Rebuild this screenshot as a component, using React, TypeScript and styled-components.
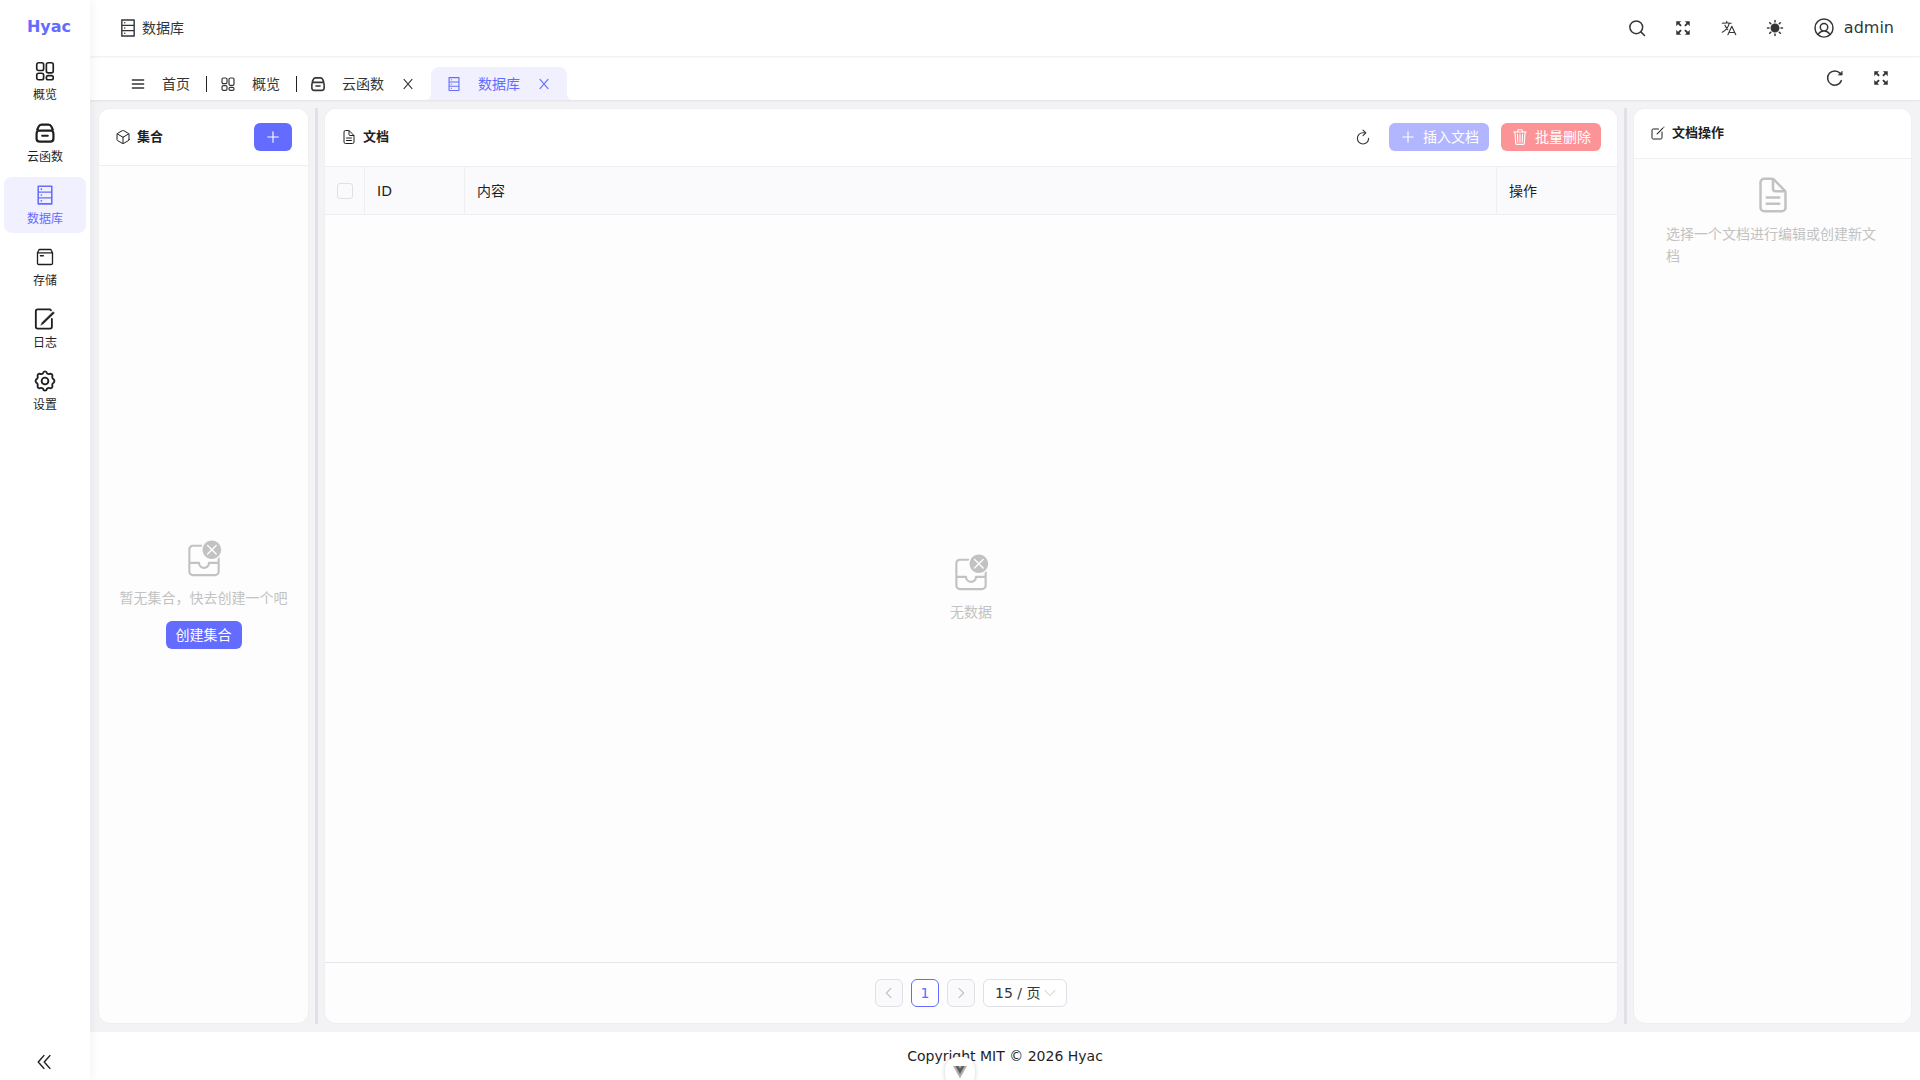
import React from 'react';
import styled, { createGlobalStyle, css } from 'styled-components';
import { AiOutlineDatabase } from 'react-icons/ai';
import { IoCubeOutline, IoDocumentTextOutline, IoCreateOutline, IoTrashOutline, IoRefreshOutline } from 'react-icons/io5';
import { PiUserCircle } from 'react-icons/pi';
import { HiOutlineLanguage } from 'react-icons/hi2';
import { MdSunny } from 'react-icons/md';

const Global = createGlobalStyle`
  *, *::before, *::after { box-sizing: border-box; }
  body {
    margin: 0;
    font: 14px/22px "DejaVu Sans", "Noto Sans CJK SC", sans-serif;
    color: #1f1f1f;
    background: #fff;
  }
  button, input, select { font: inherit; color: inherit; margin: 0; }
  button { border: 0; padding: 0; background: none; cursor: pointer; }
  a { color: inherit; text-decoration: none; }
  h1, h2, p { margin: 0; }
  svg { display: block; flex: none; }
`;

const Shell = styled.div`
  display: flex;
  min-height: 100vh;
`;

const Sidebar = styled.aside`
  position: relative;
  z-index: 2;
  width: 90px;
  flex: none;
  display: flex;
  flex-direction: column;
  background: #fff;
  box-shadow: 2px 0 8px rgba(29, 35, 41, 0.05);
`;

const Brand = styled.a`
  height: 53px;
  padding-left: 8px;
  display: flex;
  align-items: center;
  justify-content: center;
  font-size: 16px;
  font-weight: 700;
  color: #646cff;
`;

const Menu = styled.nav`
  flex: 1;
  display: flex;
  flex-direction: column;
  gap: 6px;
  padding: 0 4px;
`;

const MenuItem = styled.a<{ $active?: boolean }>`
  height: 56px;
  padding-top: 7px;
  display: flex;
  flex-direction: column;
  align-items: center;
  gap: 4px;
  font-size: 12px;
  line-height: 18px;
  border-radius: 8px;
  ${(p) => p.$active && css`
    color: #646cff;
    background: #f0f0ff;
  `}
`;

const Collapse = styled.button`
  height: 36px;
  display: flex;
  align-items: center;
  justify-content: center;
`;

const Main = styled.div`
  flex: 1;
  min-width: 0;
  display: flex;
  flex-direction: column;
`;

const Header = styled.header`
  height: 56px;
  padding: 0 26px 0 28px;
  display: flex;
  align-items: center;
  justify-content: space-between;
  color: #333639;
  box-shadow: 0 1px 2px rgba(0, 21, 41, 0.08);
`;

const Crumb = styled.div`
  display: flex;
  align-items: center;
  gap: 4px;
`;

const Tools = styled.div`
  display: flex;
  align-items: center;
`;

const ToolButton = styled.button`
  width: 46px;
  height: 36px;
  display: flex;
  align-items: center;
  justify-content: center;
`;

const User = styled.button`
  margin-left: 14px;
  display: flex;
  align-items: center;
  gap: 8px;
  font-size: 16px;
`;

const TabBar = styled.div`
  position: relative;
  z-index: 1;
  height: 44px;
  padding: 0 16px 0 27px;
  display: flex;
  justify-content: space-between;
  color: #333639;
  box-shadow: 0 1px 2px rgba(0, 21, 41, 0.08);
`;

const Tabs = styled.nav`
  display: flex;
  align-items: flex-end;
`;

const Tab = styled.a<{ $active?: boolean }>`
  position: relative;
  height: 33px;
  padding: 0 16px 0 13px;
  display: flex;
  align-items: center;
  gap: 16px;
  ${(p) => p.$active && css`
    margin-left: -1px;
    padding: 0 15px;
    color: #646cff;
    background: #f0f0ff;
    border-radius: 8px 8px 0 0;
    &::before, &::after {
      content: "";
      position: absolute;
      bottom: 0;
      width: 6px;
      height: 6px;
    }
    &::before { right: 100%; background: radial-gradient(circle at 0 0, transparent 6px, #f0f0ff 6px); }
    &::after { left: 100%; background: radial-gradient(circle at 100% 0, transparent 6px, #f0f0ff 6px); }
  `}
`;

const TabRule = styled.span`
  width: 1px;
  height: 16px;
  margin-bottom: 8px;
  background: #1f2225;
`;

const Content = styled.main`
  flex: 1;
  padding: 8px;
  display: grid;
  grid-template-columns: 211px 15px minmax(0, 1fr) 15px 279px;
  background: #f3f3f6;
`;

const Splitter = styled.div`
  width: 3px;
  justify-self: center;
  background: #e0e0e6;
`;

const Panel = styled.section`
  display: flex;
  flex-direction: column;
  overflow: hidden;
  border: 1px solid #efeff1;
  border-radius: 12px;
  background: #fdfdfd;
`;

const PanelHead = styled.div<{ $height: number }>`
  height: ${(p) => p.$height}px;
  padding: 0 16px 1px;
  display: flex;
  align-items: center;
  justify-content: space-between;
  background: #fff;
  border-bottom: 1px solid #efeff1;
`;

const PanelTitle = styled.h2`
  display: flex;
  align-items: center;
  gap: 6px;
  font-size: 13px;
  font-weight: 700;
`;

const Actions = styled.div`
  display: flex;
  align-items: center;
  gap: 12px;
`;

const IconButton = styled.button`
  padding: 0 5px;
  color: #333639;
`;

const tones = { primary: '#646cff', soft: '#b2b6ff', danger: '#fb9397' };

const Button = styled.button<{ $tone: keyof typeof tones }>`
  height: 28px;
  padding: 0 10px;
  display: flex;
  align-items: center;
  gap: 6px;
  color: #fff;
  background: ${(p) => tones[p.$tone]};
  border-radius: 6px;
`;

const Empty = styled.div<{ $top?: boolean }>`
  flex: 1;
  padding: ${(p) => (p.$top ? '16px 32px' : '0 0 2px')};
  display: flex;
  flex-direction: column;
  align-items: center;
  justify-content: ${(p) => (p.$top ? 'flex-start' : 'center')};
  gap: 8px;
  color: #c2c2c2;
  ${Button} { margin-top: 4px; }
`;

const Table = styled.table`
  width: 100%;
  table-layout: fixed;
  border-collapse: separate;
  border-spacing: 0;
`;

const Th = styled.th<{ $width?: number }>`
  width: ${(p) => (p.$width ? `${p.$width}px` : 'auto')};
  height: 48px;
  padding: 0 12px;
  text-align: left;
  font-weight: 400;
  background: #fafafc;
  border-bottom: 1px solid #efeff1;
  border-right: 1px solid #efeff1;
  &:last-child { border-right: 0; }
`;

const Check = styled.input`
  appearance: none;
  display: block;
  width: 16px;
  height: 16px;
  border: 1px solid #e0e0e6;
  border-radius: 3px;
  background: #fafafc;
`;

const Pager = styled.nav`
  height: 61px;
  display: flex;
  align-items: center;
  justify-content: center;
  gap: 8px;
  border-top: 1px solid #e6e6ea;
`;

const PageButton = styled.button<{ $current?: boolean }>`
  width: 28px;
  height: 28px;
  display: flex;
  align-items: center;
  justify-content: center;
  border: 1px solid ${(p) => (p.$current ? '#646cff' : '#e0e0e6')};
  border-radius: 6px;
  color: ${(p) => (p.$current ? '#646cff' : '#c2c2c2')};
  background: ${(p) => (p.$current ? '#fff' : '#fafafc')};
`;

const SizeBox = styled.label`
  position: relative;
  width: 84px;
  color: #c2c2c2;
  svg {
    position: absolute;
    right: 11px;
    top: 8px;
    pointer-events: none;
  }
`;

const SizeSelect = styled.select`
  appearance: none;
  display: block;
  width: 100%;
  height: 28px;
  padding: 0 11px;
  border: 1px solid #e0e0e6;
  border-radius: 6px;
  background: #fff;
  color: #333639;
`;

const Footer = styled.footer`
  height: 48px;
  display: flex;
  align-items: center;
  justify-content: center;
`;

const DevToggle = styled.button`
  position: fixed;
  z-index: 3;
  left: 50%;
  bottom: -7px;
  width: 30px;
  height: 30px;
  transform: translateX(-50%);
  display: flex;
  align-items: center;
  justify-content: center;
  background: #fff;
  border-radius: 12px;
  box-shadow: 0 0 4px rgba(0, 0, 0, 0.2);
`;

type IconProps = { size?: number };

const Stroke = ({ size = 22, width = 1.5, children }: IconProps & { width?: number; children: React.ReactNode }) => (
  <svg width={size} height={size} viewBox="0 0 24 24" fill="none" stroke="currentColor" strokeWidth={width} strokeLinecap="round" strokeLinejoin="round" aria-hidden="true">
    {children}
  </svg>
);

const OverviewIcon = ({ size = 22 }: IconProps) => (
  <Stroke size={size} width={1.8}>
    <rect x="3" y="3" width="7.5" height="8.5" rx="2" />
    <rect x="13.5" y="3" width="7.5" height="11" rx="2" />
    <rect x="3" y="14.5" width="7.5" height="7" rx="2" />
    <rect x="13.5" y="17" width="7.5" height="4.5" rx="2" />
  </Stroke>
);

const FunctionIcon = ({ size = 22 }: IconProps) => (
  <Stroke size={size} width={2.4}>
    <path d="M3.5 8.500 5 5Q6 2.800 8.300 2.800H15.700Q18 2.800 19 5L20.500 8.500M4 9.500H20Q21.200 11 21.200 13V18Q21.200 21.500 17.700 21.500H6.300Q2.800 21.500 2.800 18V13Q2.800 11 4 9.500ZM9 15H15" />
  </Stroke>
);

const StorageIcon = ({ size = 22 }: IconProps) => (
  <Stroke size={size} width={1.6}>
    <path d="M3 7H21V19.5Q21 21 19.5 21H4.5Q3 21 3 19.5ZM3 7 4.500 3.800Q4.800 3 5.500 3H18.500Q19.200 3 19.500 3.800L21 7M6.500 10.500H10" />
  </Stroke>
);

const LogIcon = ({ size = 22 }: IconProps) => (
  <Stroke size={size} width={2}>
    <path d="M18.5 2.500Q18 1.500 17 1.500H4Q2 1.500 2 3.500V20.500Q2 22.500 4 22.500H17.500Q19.500 22.500 19.500 20.500V12" />
    <path d="M7.500 18.500 9 15.500 20.800 4 22.300 5.500 10.500 17Z" fill="currentColor" strokeWidth="0.500" />
  </Stroke>
);

const SettingsIcon = ({ size = 22 }: IconProps) => (
  <Stroke size={size} width={2}>
    <circle cx="12" cy="12" r="3.700" />
    <path d="M12 1.500Q13.800 1.500 14.300 3.800Q16 5 18 4Q20.500 4.300 20 6.800Q19.500 9.300 21.500 10.200Q23 12 21.500 13.800Q19.500 14.700 20 17.200Q20.500 19.700 18 20Q16 19 14.300 20.200Q13.800 22.500 12 22.500Q10.200 22.500 9.700 20.200Q8 19 6 20Q3.500 19.700 4 17.200Q4.500 14.700 2.500 13.800Q1 12 2.500 10.200Q4.500 9.300 4 6.800Q3.500 4.300 6 4Q8 5 9.700 3.800Q10.200 1.500 12 1.500Z" />
  </Stroke>
);

const SearchIcon = () => (
  <Stroke size={18} width={2}>
    <circle cx="11" cy="11" r="8.500" />
    <path d="m17.500 17.500 4.500 4.500" />
  </Stroke>
);

const ExpandIcon = () => (
  <svg width="18" height="18" viewBox="0 0 24 24" aria-hidden="true">
    <path d="M3 3h6.500L7.300 5.200 10.300 8.200 8.500 10 5.400 7 3 9.500zM21 3v6.500L18.600 7 15.500 10 13.700 8.200 16.700 5.200 14.500 3zM3 21v-6.500L5.400 17 8.500 14 10.300 15.800 7.300 18.800 9.500 21zM21 21h-6.500L16.700 18.800 13.700 15.800 15.500 14 18.600 17 21 14.500z" fill="currentColor" />
  </svg>
);

const ReloadIcon = () => (
  <Stroke size={18} width={2}>
    <path d="M20.500 15.500A9.500 9.500 0 1 1 19 6" />
    <path d="M21.500 3.500V8H17Z" fill="currentColor" strokeWidth="1" />
  </Stroke>
);

const MenuIcon = () => (
  <Stroke size={16} width={2}>
    <path d="M3.500 6H20.500M3.500 12H20.500M3.500 18H20.500" />
  </Stroke>
);

const CloseIcon = () => (
  <Stroke size={16} width={1.6}>
    <path d="M6 5 18 19M18 5 6 19" />
  </Stroke>
);

const PlusIcon = ({ size = 18 }: IconProps) => (
  <Stroke size={size} width={1.5}>
    <path d="M12 5V19M5 12H19" />
  </Stroke>
);

const CollapseIcon = () => (
  <Stroke size={18} width={2}>
    <path d="M10.500 3.500 3 12 10.500 20.500M18.500 3.500 11 12 18.500 20.500" />
  </Stroke>
);

const Chevron = ({ d, size = 16 }: { d: string; size?: number }) => (
  <Stroke size={size} width={1.8}>
    <path d={d} />
  </Stroke>
);

const EmptyIcon = () => (
  <svg width="40" height="40" viewBox="0 0 28 28" fill="currentColor" aria-hidden="true">
    <path d="M26 7.5C26 11.0899 23.0899 14 19.5 14C15.9101 14 13 11.0899 13 7.5C13 3.91015 15.9101 1 19.5 1C23.0899 1 26 3.91015 26 7.5ZM16.8536 4.14645C16.6583 3.95118 16.3417 3.95118 16.1464 4.14645C15.9512 4.34171 15.9512 4.65829 16.1464 4.85355L18.7929 7.5L16.1464 10.1464C15.9512 10.3417 15.9512 10.6583 16.1464 10.8536C16.3417 11.0488 16.6583 11.0488 16.8536 10.8536L19.5 8.20711L22.1464 10.8536C22.3417 11.0488 22.6583 11.0488 22.8536 10.8536C23.0488 10.6583 23.0488 10.3417 22.8536 10.1464L20.2071 7.5L22.8536 4.85355C23.0488 4.65829 23.0488 4.34171 22.8536 4.14645C22.6583 3.95118 22.3417 3.95118 22.1464 4.14645L19.5 6.79289L16.8536 4.14645Z" />
    <path d="M25 22.75V12.5991C24.5572 13.0765 24.053 13.4961 23.5 13.8454V16H17.5L17.3982 16.0068C17.0322 16.0565 16.75 16.3703 16.75 16.75C16.75 18.2688 15.5188 19.5 14 19.5C12.4812 19.5 11.25 18.2688 11.25 16.75L11.2432 16.6482C11.1935 16.2822 10.8797 16 10.5 16H4.5V7.25C4.5 6.2835 5.2835 5.5 6.25 5.5H12.2696C12.4146 4.97463 12.6153 4.47237 12.865 4H6.25C4.45507 4 3 5.45507 3 7.25V22.75C3 24.5449 4.45507 26 6.25 26H21.75C23.5449 26 25 24.5449 25 22.75ZM4.5 22.75V17.5H9.81597L9.85751 17.7041C10.2905 19.5919 11.9808 21 14 21L14.215 20.9947C16.2095 20.8953 17.842 19.4209 18.184 17.5H23.5V22.75C23.5 23.7165 22.7165 24.5 21.75 24.5H6.25C5.2835 24.5 4.5 23.7165 4.5 22.75Z" />
  </svg>
);

const VueIcon = () => (
  <svg width="14" height="13" viewBox="0 0 14 13" aria-hidden="true">
    <path d="M0 0H14L7 12.500Z" fill="#b0b0b0" />
    <path d="M2.500 0H11.500L7 8Z" fill="#5c5c5c" />
    <path d="M5.300 0H8.700L7 2.800Z" fill="#b0b0b0" />
  </svg>
);

const menu = [
  { label: '概览', icon: <OverviewIcon /> },
  { label: '云函数', icon: <FunctionIcon /> },
  { label: '数据库', icon: <AiOutlineDatabase size={22} />, active: true },
  { label: '存储', icon: <StorageIcon size={20} /> },
  { label: '日志', icon: <LogIcon /> },
  { label: '设置', icon: <SettingsIcon /> },
];

const MenuGlyph = styled.span`
  height: 22px;
  display: flex;
  align-items: center;
`;

export default function App() {
  return (
    <Shell>
      <Global />
      <Sidebar>
        <Brand href="#">Hyac</Brand>
        <Menu aria-label="主菜单">
          {menu.map((m) => (
            <MenuItem key={m.label} href="#" $active={m.active}>
              <MenuGlyph>{m.icon}</MenuGlyph>
              {m.label}
            </MenuItem>
          ))}
        </Menu>
        <Collapse type="button" aria-label="收起菜单"><CollapseIcon /></Collapse>
      </Sidebar>
      <Main>
        <Header>
          <Crumb><AiOutlineDatabase size={20} />数据库</Crumb>
          <Tools>
            <ToolButton type="button" aria-label="搜索"><SearchIcon /></ToolButton>
            <ToolButton type="button" aria-label="全屏"><ExpandIcon /></ToolButton>
            <ToolButton type="button" aria-label="语言"><HiOutlineLanguage size={18} /></ToolButton>
            <ToolButton type="button" aria-label="主题"><MdSunny size={18} /></ToolButton>
            <User type="button"><PiUserCircle size={24} />admin</User>
          </Tools>
        </Header>
        <TabBar>
          <Tabs>
            <Tab href="#"><MenuIcon />首页</Tab>
            <TabRule />
            <Tab href="#"><OverviewIcon size={16} />概览</Tab>
            <TabRule />
            <Tab href="#"><FunctionIcon size={16} />云函数<CloseIcon /></Tab>
            <Tab href="#" $active><AiOutlineDatabase size={16} />数据库<CloseIcon /></Tab>
          </Tabs>
          <Tools>
            <ToolButton type="button" aria-label="刷新页面"><ReloadIcon /></ToolButton>
            <ToolButton type="button" aria-label="内容全屏"><ExpandIcon /></ToolButton>
          </Tools>
        </TabBar>
        <Content>
          <Panel>
            <PanelHead $height={57}>
              <PanelTitle><IoCubeOutline size={16} />集合</PanelTitle>
              <Button type="button" $tone="primary" aria-label="新建集合"><PlusIcon /></Button>
            </PanelHead>
            <Empty>
              <EmptyIcon />
              <p>暂无集合，快去创建一个吧</p>
              <Button type="button" $tone="primary">创建集合</Button>
            </Empty>
          </Panel>
          <Splitter />
          <Panel>
            <PanelHead $height={58}>
              <PanelTitle><IoDocumentTextOutline size={16} />文档</PanelTitle>
              <Actions>
                <IconButton type="button" aria-label="刷新"><IoRefreshOutline size={18} /></IconButton>
                <Button type="button" $tone="soft" disabled><PlusIcon />插入文档</Button>
                <Button type="button" $tone="danger" disabled><IoTrashOutline size={18} />批量删除</Button>
              </Actions>
            </PanelHead>
            <Table>
              <thead>
                <tr>
                  <Th $width={40}><Check type="checkbox" aria-label="全选" /></Th>
                  <Th $width={100}>ID</Th>
                  <Th>内容</Th>
                  <Th $width={120}>操作</Th>
                </tr>
              </thead>
            </Table>
            <Empty>
              <EmptyIcon />
              <p>无数据</p>
            </Empty>
            <Pager aria-label="分页">
              <PageButton type="button" disabled aria-label="上一页"><Chevron d="M15 5 8 12 15 19" /></PageButton>
              <PageButton type="button" $current>1</PageButton>
              <PageButton type="button" disabled aria-label="下一页"><Chevron d="M9 5 16 12 9 19" /></PageButton>
              <SizeBox>
                <SizeSelect aria-label="每页条数"><option>15 / 页</option></SizeSelect>
                <Chevron size={12} d="M2 7 12 17 22 7" />
              </SizeBox>
            </Pager>
          </Panel>
          <Splitter />
          <Panel>
            <PanelHead $height={50}>
              <PanelTitle><IoCreateOutline size={16} />文档操作</PanelTitle>
            </PanelHead>
            <Empty $top>
              <IoDocumentTextOutline size={40} />
              <p>选择一个文档进行编辑或创建新文档</p>
            </Empty>
          </Panel>
        </Content>
        <Footer>Copyright MIT © 2026 Hyac</Footer>
      </Main>
      <DevToggle type="button" aria-label="开发工具"><VueIcon /></DevToggle>
    </Shell>
  );
}
